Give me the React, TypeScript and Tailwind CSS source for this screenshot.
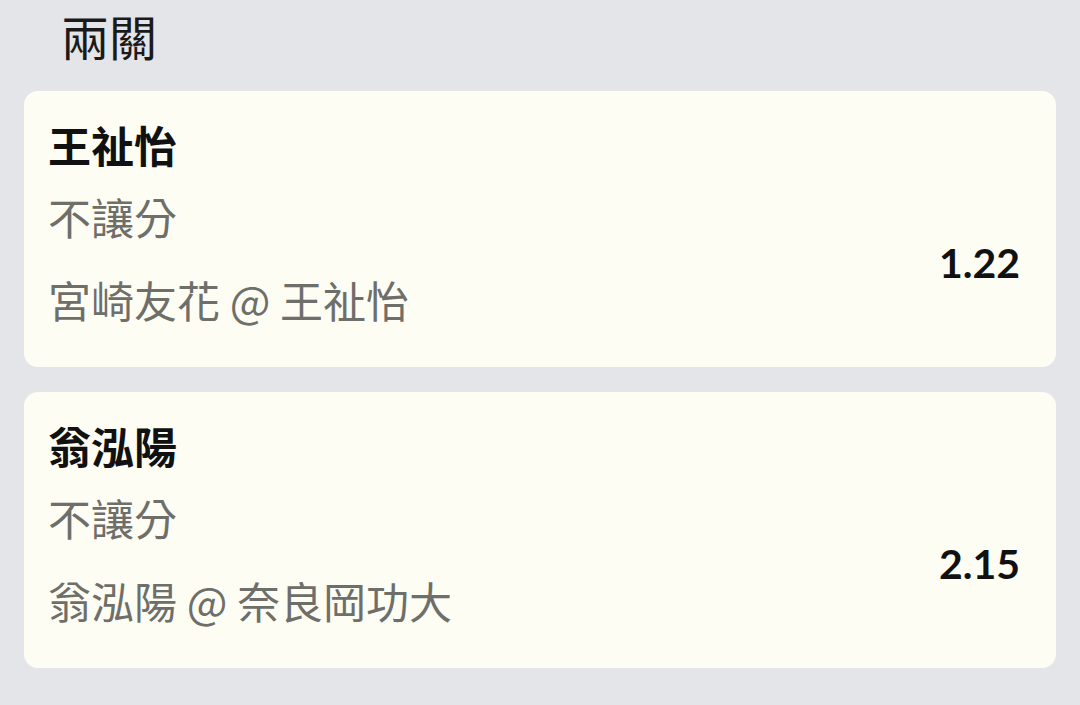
const cjk = "font-['Noto_Sans_CJK_TC','Noto_Sans_CJK_SC',sans-serif]"

type Bet = {
  pick: string
  market: string
  matchup: string
  odds: string
}

const bets: Bet[] = [
  { pick: "王祉怡", market: "不讓分", matchup: "宮崎友花 @ 王祉怡", odds: "1.22" },
  { pick: "翁泓陽", market: "不讓分", matchup: "翁泓陽 @ 奈良岡功大", odds: "2.15" },
]

function BetCard({ bet }: { bet: Bet }) {
  return (
    <div className="flex h-[276px] justify-between rounded-[14px] bg-[#fdfdf4] pr-[36px] pl-[24px]">
      <div className={`flex flex-col pt-[21px] ${cjk}`}>
        <div className="text-[43px] leading-[64px] font-bold text-[#111]">{bet.pick}</div>
        <div className="mt-[8px] text-[43px] leading-[64px] text-[#6e6e6a]">{bet.market}</div>
        <div className="mt-[19px] text-[43px] leading-[64px] text-[#6e6e6a]">{bet.matchup}</div>
      </div>
      <div className="self-center pt-[66px] font-['Lato',sans-serif] text-[41px] leading-none font-bold text-[#111]">
        {bet.odds}
      </div>
    </div>
  )
}

export default function App() {
  return (
    <div className="min-h-[705px] w-full bg-[#e4e5e9]">
      <div className={`pl-[61px] text-[48px] leading-[70px] text-[#1a1a1a] ${cjk}`}>兩關</div>
      <div className="mt-[21px] flex flex-col gap-[25px] px-[24px]">
        {bets.map((b) => (
          <BetCard key={b.odds} bet={b} />
        ))}
      </div>
    </div>
  )
}
